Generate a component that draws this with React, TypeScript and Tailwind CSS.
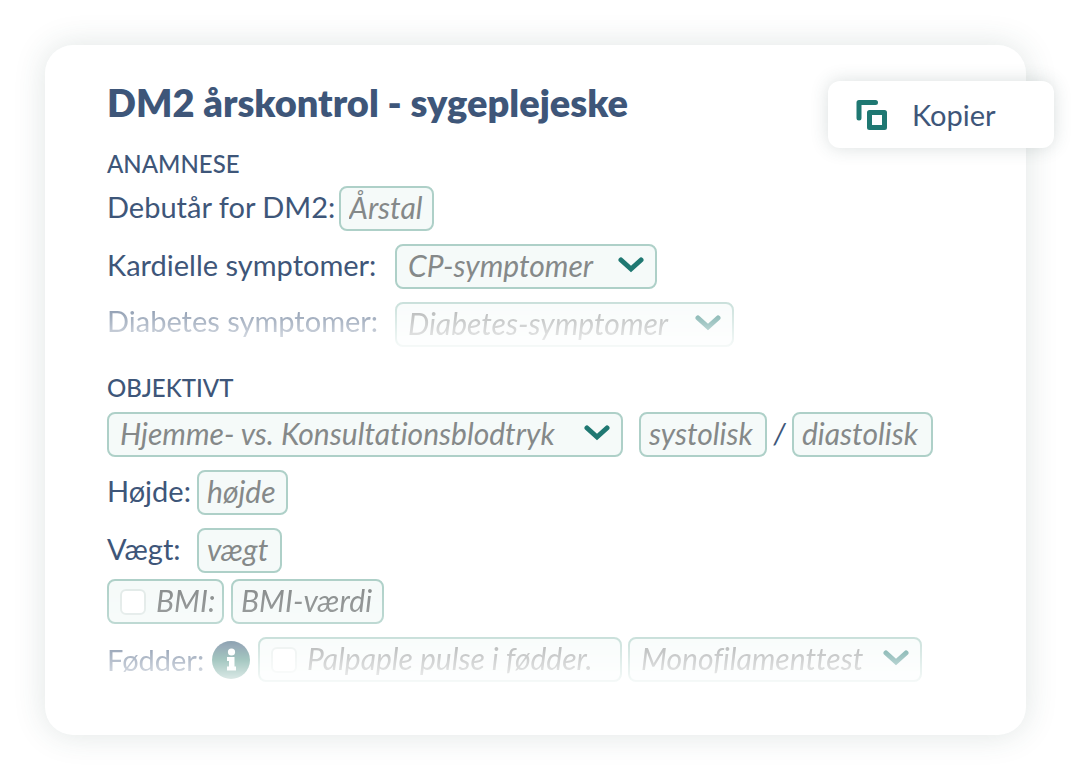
import React from 'react';

interface FieldProps {
  id?: string;
  label: string;
  className: string;
}

const FADE = '[mask-image:linear-gradient(to_bottom,rgb(0_0_0/0.66),rgb(0_0_0/0.12))]';

const TextField: React.FC<FieldProps> = ({ id, label, className }) => (
  <input
    id={id}
    type="text"
    aria-label={label}
    placeholder={label}
    className={`h-[45px] rounded-lg border-2 border-[#aed0c8] bg-[#f5faf9] px-2 pb-1 text-3xl italic text-[#858989] outline-none placeholder:text-[#858989] placeholder:opacity-100 ${className}`}
  />
);

const SelectField: React.FC<FieldProps> = ({ id, label, className }) => (
  <div className={`flex h-[45px] items-center rounded-lg border-2 border-[#aed0c8] bg-[#f5faf9] pr-[11px] pb-1 pl-[11px] ${className}`}>
    <select id={id} aria-label={label} className="min-w-0 flex-1 appearance-none bg-transparent text-3xl leading-9 italic text-[#858989] outline-none">
      <option>{label}</option>
    </select>
    <svg viewBox="0 0 26 17" className="h-[17px] w-[26px] shrink-0" fill="none" stroke="#1f7872" strokeWidth="5" strokeLinecap="round" strokeLinejoin="miter">
      <path d="M3 4 13 13 23 4" />
    </svg>
  </div>
);

const CheckField: React.FC<FieldProps> = ({ id, label, className }) => (
  <div className={`flex h-[45px] items-center gap-2.5 rounded-lg border-2 border-[#aed0c8] bg-[#f5faf9] pl-[11px] ${className}`}>
    <input id={id} type="checkbox" className="size-[26px] shrink-0 appearance-none rounded-md border-2 border-[#e2eae8] bg-white" />
    <label htmlFor={id} className="pb-1 text-3xl leading-9 italic whitespace-nowrap text-[#858989]">{label}</label>
  </div>
);

const InfoIcon = () => (
  <svg viewBox="0 0 38 38" className="size-[38px]">
    <defs>
      <linearGradient id="info" x1="0" y1="0" x2="0" y2="1">
        <stop offset="0.15" stopColor="#42667e" />
        <stop offset="0.5" stopColor="#146e5d" />
      </linearGradient>
    </defs>
    <circle cx="19" cy="19" r="19" fill="url(#info)" />
    <circle cx="19.5" cy="11" r="3.6" fill="#fff" />
    <path d="M15 16h7.5v9.5H24V29.500H15V25.500h2V20h-2z" fill="#fff" />
  </svg>
);

const CopyIcon = () => (
  <svg viewBox="0 0 32 32" className="size-8" fill="none" stroke="#1f7872" strokeWidth="5" strokeLinecap="round" strokeLinejoin="round">
    <path d="M3 19V3.500H19.500" />
    <path d="M13.500 13.500h15v15h-15z" />
  </svg>
);

const App: React.FC = () => {
  return (
    <main className="bg-white pt-[45px] pr-[54px] pb-[45px] pl-[45px] font-['Lato','Open_Sans',sans-serif] text-[29px] leading-9 text-[#3e5679] [font-variant-ligatures:none]">
      <div className="relative rounded-[28px] bg-white px-[62px] pt-9 pb-[53px] shadow-[0_0_32px_rgba(50,80,75,0.15)]">
        <h1 className="text-[38px] leading-[43px] font-extrabold">DM2 årskontrol - sygeplejeske</h1>

        <button
          type="button"
          className="absolute top-9 -right-7 flex h-[67px] w-[226px] items-center gap-6 rounded-xl bg-white pl-7 shadow-[0_0_18px_rgba(50,80,75,0.18)]"
        >
          <CopyIcon />
          Kopier
        </button>

        {/* Anamnese */}
        <section className="mt-6">
          <h2 className="mb-1.5 text-2xl leading-8 font-medium">ANAMNESE</h2>
          <div className="flex flex-col gap-[13px]">
            <div className="flex items-center">
              <label htmlFor="debut" className="w-[232px] pb-1">Debutår for DM2:</label>
              <TextField id="debut" label="Årstal" className="w-[95px]" />
            </div>
            <div className="flex items-center">
              <label htmlFor="kardielle" className="w-[288px] pb-1">Kardielle symptomer:</label>
              <SelectField id="kardielle" label="CP-symptomer" className="w-[262px]" />
            </div>
            <div className={`flex items-center ${FADE}`}>
              <label htmlFor="diabetes" className="w-[288px] pb-2">Diabetes symptomer:</label>
              <SelectField id="diabetes" label="Diabetes-symptomer" className="w-[339px]" />
            </div>
          </div>
        </section>

        {/* Objektivt */}
        <section className="mt-[25px]">
          <h2 className="mb-2 text-2xl leading-8 font-medium">OBJEKTIVT</h2>
          <div className="flex flex-col gap-[13px]">
            <div className="flex items-center">
              <SelectField label="Hjemme- vs. Konsultationsblodtryk" className="mr-4 w-[516px]" />
              <TextField label="systolisk" className="w-[128px]" />
              <span className="w-[25px] pb-1 text-center italic">/</span>
              <TextField label="diastolisk" className="w-[141px]" />
            </div>
            <div className="flex items-center">
              <label htmlFor="hoejde" className="w-[90px] pb-1">Højde:</label>
              <TextField id="hoejde" label="højde" className="w-[91px]" />
            </div>
            <div className="flex flex-col gap-1.5">
              <div className="flex items-center">
                <label htmlFor="vaegt" className="w-[90px] pb-1">Vægt:</label>
                <TextField id="vaegt" label="vægt" className="w-[85px]" />
              </div>
              <div className="flex items-center gap-[7px] [mask-image:linear-gradient(to_bottom,black,rgb(0_0_0/0.8))]">
                <CheckField id="bmi" label="BMI:" className="w-[117px]" />
                <TextField label="BMI-værdi" className="w-[153px]" />
              </div>
            </div>
            <div className={`flex items-center ${FADE}`}>
              <span className="w-[105px]">Fødder:</span>
              <InfoIcon />
              <CheckField id="puls" label="Palpaple pulse i fødder." className="mr-1.5 ml-2 w-[364px]" />
              <SelectField label="Monofilamenttest" className="w-[294px]" />
            </div>
          </div>
        </section>
      </div>
    </main>
  );
};

export default App;
